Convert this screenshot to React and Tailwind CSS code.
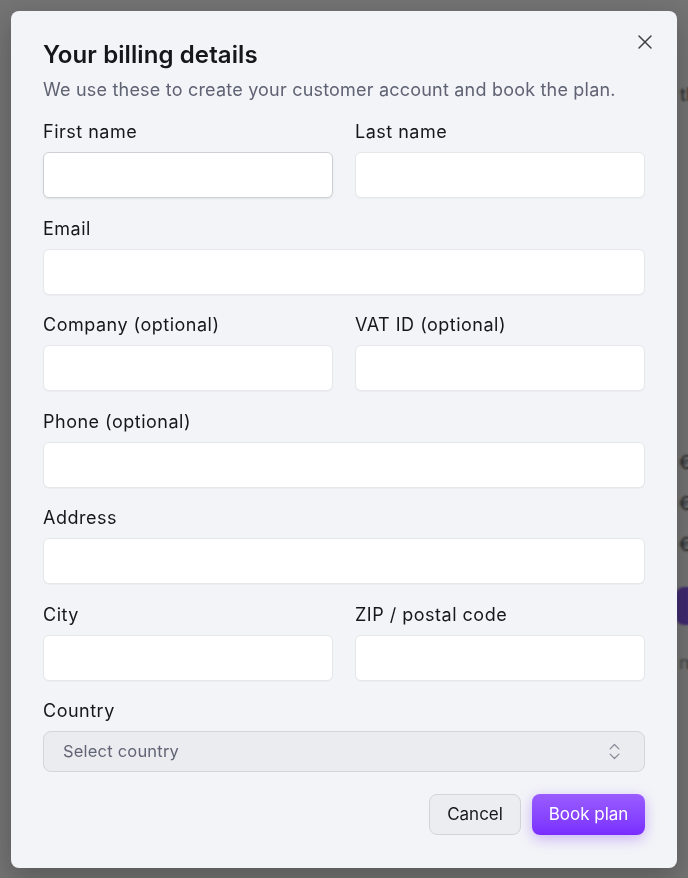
import { X, ChevronsUpDown } from 'lucide-react';

const fieldRows = [
  [{ label: 'First name', focus: true }, { label: 'Last name' }],
  [{ label: 'Email' }],
  [{ label: 'Company (optional)' }, { label: 'VAT ID (optional)' }],
  [{ label: 'Phone (optional)' }],
  [{ label: 'Address' }],
  [{ label: 'City' }, { label: 'ZIP / postal code' }],
];

function Field({ label, focus }) {
  return (
    <label className="flex flex-col flex-1 min-w-0">
      <span className="text-[18px] leading-[26px] tracking-[0.5px] text-[#16171b] mb-[7px]">{label}</span>
      <input
        type="text"
        className={
          'h-[46px] w-full rounded-[6px] bg-white px-3 text-[17px] outline-none ' +
          (focus
            ? 'border-[1.5px] border-[#cfd0d5] shadow-[0_1px_2px_rgba(0,0,0,0.08)]'
            : 'border border-[#e6e7eb] shadow-[0_1px_1px_rgba(0,0,0,0.03)]')
        }
      />
    </label>
  );
}

function Background() {
  // page behind the dialog, only its right edge peeks out
  return (
    <div className="min-h-[878px] bg-white flex">
      <div className="w-[676px] shrink-0" />
      <div className="flex flex-col text-[18px] leading-[27px] text-[#555] pt-[81px]">
        <div className="pl-[4px]">the</div>
        <div className="flex flex-col gap-[14px] mt-[341px] pl-[3px]">
          <div>€€</div>
          <div>€€</div>
          <div>€€</div>
        </div>
        <div className="mt-[29px] h-[38px] w-[200px] rounded-[8px] bg-[#8b5cf6]" />
        <div className="mt-[24px] pl-[3px] text-[#999]">nt</div>
      </div>
    </div>
  );
}

export default function App() {
  return (
    <div className="relative w-[688px] h-[878px] overflow-hidden" style={{ fontFamily: 'Inter, "Noto Sans", sans-serif' }}>
      <Background />
      <div className="absolute inset-0 bg-black/55 backdrop-blur-[1px] flex items-start pt-[11px] pl-[11px]">
        <div className="relative w-[666px] rounded-[8px] bg-[#f3f4f8] px-[32px] pt-[29px] pb-[33px] shadow-[0_10px_30px_rgba(0,0,0,0.25)]">
          <button className="absolute top-[19px] right-[20px] text-[#3f4046]">
            <X size={24} strokeWidth={1.5} />
          </button>
          <h2 className="text-[24px] leading-[30px] font-semibold tracking-[0.1px] text-[#16171b]">Your billing details</h2>
          <p className="mt-[6px] text-[18px] leading-[27px] tracking-[0.2px] text-[#5e6272]">
            We use these to create your customer account and book the plan.
          </p>

          <div className="mt-[16px] flex flex-col gap-[17.5px]">
            {fieldRows.map((row, i) => (
              <div key={i} className="flex gap-[22px]">
                {row.map((f) => (
                  <Field key={f.label} {...f} />
                ))}
              </div>
            ))}
            <div className="flex flex-col">
              <span className="text-[18px] leading-[26px] tracking-[0.5px] text-[#16171b] mb-[7px]">Country</span>
              <div className="h-[41px] rounded-[8px] border border-[#d5d6db] bg-[#ebecf0] flex items-center justify-between pl-[19px] pr-[19px]">
                <span className="text-[16.5px] tracking-[0.2px] text-[#606474]">Select country</span>
                <ChevronsUpDown size={21} strokeWidth={1.5} className="text-[#8a8d98]" />
              </div>
            </div>
          </div>

          <div className="mt-[22px] flex justify-end gap-[11px]">
            <button className="h-[41px] w-[92px] rounded-[8px] border border-[#d3d4d9] bg-[#ecedf1] text-[17px] text-[#16171b]">
              Cancel
            </button>
            <button className="h-[41px] w-[113px] rounded-[8px] bg-gradient-to-b from-[#9a5cff] to-[#7a2cff] text-[17px] text-white shadow-[0_4px_14px_rgba(124,58,237,0.35)]">
              Book plan
            </button>
          </div>
        </div>
      </div>
    </div>
  );
}
